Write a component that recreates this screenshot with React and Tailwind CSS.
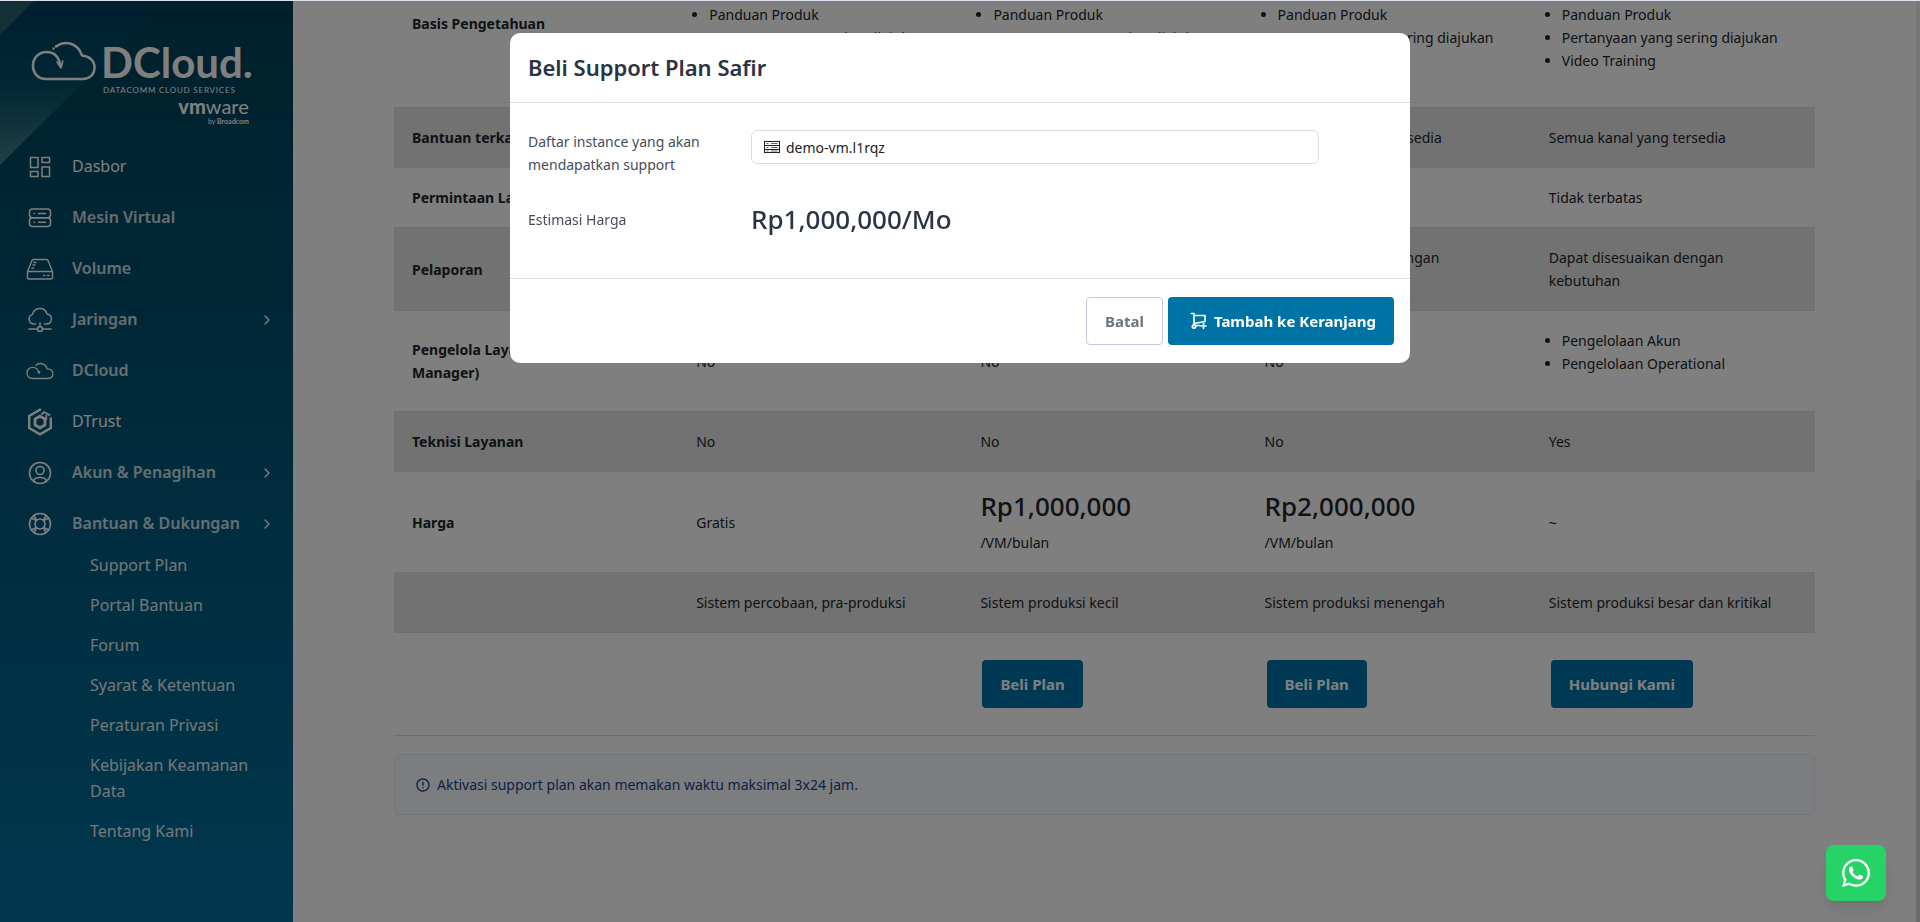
import React from "react";
import { FaWhatsapp } from "react-icons/fa";
import { RiErrorWarningLine } from "react-icons/ri";
import { ChevronRight } from "lucide-react";

const iconProps = {
  fill: "none",
  stroke: "currentColor",
  strokeLinecap: "round",
  strokeLinejoin: "round",
};

const DashboardIcon = () => (
  <svg width="22" height="22" viewBox="0 0 22 22" {...iconProps} strokeWidth="1.5" strokeLinejoin="miter">
    <rect x="1.5" y="1.5" width="7.5" height="10" />
    <rect x="13" y="1.5" width="7.5" height="5" />
    <rect x="1.5" y="15.5" width="7.5" height="5" />
    <rect x="13" y="11" width="7.5" height="9.5" />
  </svg>
);

const ServerIcon = () => (
  <svg width="24" height="22" viewBox="0 0 24 22" {...iconProps} strokeWidth="1.5">
    <rect x="1.5" y="2" width="21" height="8.8" rx="3" />
    <rect x="1.5" y="10.8" width="21" height="8.8" rx="3" />
    <path d="M6 6.4h.5M10.5 6.4h7M6 15.2h.5M10.5 15.2h7" />
  </svg>
);

const VolumeIcon = () => (
  <svg width="28" height="24" viewBox="0 0 28 24" {...iconProps} strokeWidth="1.4">
    <path d="M1.500 14.500 6 3.500q.4-1 1.500-1h13q1.100 0 1.500 1l4.500 11v6q0 1.500-1.500 1.500H3q-1.500 0-1.500-1.500zM1.500 14.500h25" />
    <path d="M17.500 18.500h1.500M21.500 18.500h1.500M7 8h2M8 5.500h2M6 11h1.500" />
  </svg>
);

const NetworkIcon = () => (
  <svg width="26" height="26" viewBox="0 0 26 26" {...iconProps} strokeWidth="1.5">
    <path d="M8.500 17H6a5 5 0 0 1-.5-9.600A7.500 7.500 0 0 1 20 6.900 5.100 5.100 0 0 1 20 17h-2.500" />
    <circle cx="13" cy="22" r="2.500" />
    <path d="M13 19.500V16M2 22h8.500M15.500 22H24" />
  </svg>
);

const CloudIcon = () => (
  <svg width="28" height="18" viewBox="0 0 28 18" {...iconProps} strokeWidth="1.3">
    <path d="M10 3.200C12 1 17 .6 19.800 4c.7.9 1.100 1.800 1.200 2.800 3.200-.2 6 2 6 5 0 2.900-2 4.700-5 4.700H6.500c-3.300 0-5.500-2.300-5.500-5.500s2.400-5.700 5.500-5.700c3.500 0 5.800 2.200 6.500 5.900M12 9.700l1.200 1.500 .6-1.800" />
  </svg>
);

const TrustIcon = () => (
  <svg width="26" height="28" viewBox="0 0 26 28" fill="none" stroke="currentColor" strokeWidth="2.4">
    <path d="M14 2.200 13 1.600 2.200 7.900v12.200L13 26.400l10.800-6.300V9.500" />
    <path d="M13 8.200 18 11.100v5.800l-5 2.900-5-2.900v-5.800z" strokeWidth="2.8" />
    <path d="M14.500 6.500l2.500-2.500 6 3.400M19.300 7v5" strokeWidth="1.8" />
  </svg>
);

const AccountIcon = () => (
  <svg width="24" height="24" viewBox="0 0 24 24" {...iconProps} strokeWidth="1.6">
    <circle cx="12" cy="12" r="10.500" />
    <circle cx="12" cy="9.500" r="4" />
    <path d="M5.500 20c1-3 3.500-3.500 6.500-3.500s5.500.5 6.500 3.500" />
  </svg>
);

const HelpIcon = () => (
  <svg width="24" height="24" viewBox="0 0 24 24" {...iconProps} strokeWidth="1.6">
    <circle cx="12" cy="12" r="10.500" />
    <circle cx="12" cy="12" r="5" />
    <path d="m3.500 6 4.800 2.600M6 3.500l2.600 4.800M20.500 6l-4.800 2.600M18 3.500l-2.600 4.800M3.500 18l4.800-2.600M6 20.500l2.600-4.800M20.500 18l-4.800-2.600M18 20.500l-2.600-4.800" />
  </svg>
);

const InstanceIcon = () => (
  <svg width="16" height="14" viewBox="0 0 16 14" fill="none" stroke="currentColor">
    <path d="M.5 1.500h15v11H.5zM.5 5.500h15M.5 9.500h15" strokeWidth="1.2" />
    <path d="M2.500 3.500h2M2.500 7.500h2M2.500 11h2M7 3.500h6.500M7 7.500h6.500M7 11h6.500" strokeOpacity="0.7" />
  </svg>
);

const CartIcon = () => (
  <svg width="18" height="18" viewBox="0 0 18 18" {...iconProps} strokeWidth="1.6">
    <path d="M1.500 1.500H4v11M4 3.500h11v6L4 11.500M4 13.500h6" />
    <circle cx="4" cy="14.500" r="1.700" />
    <path d="M13.500 11.500v5M11 14h5" />
  </svg>
);

const Logo = () => (
  <a href="#beranda" className="mx-[31px] mt-10 flex text-white" aria-label="DCloud">
    <svg width="66" height="42" viewBox="0 0 66 42" {...iconProps} strokeWidth="2.6">
      <path d="M25 5.500C33-.5 46 .5 51 14.500c7 .5 12.500 5 12.500 12 0 7-5 11.500-11.500 11.500H15C7 38 2 32 2 24.500S8 11 15.500 11c8 0 12.500 5 14 14" />
      <path d="m26 21 4 6 1.800-7" strokeWidth="1.6" />
      <circle cx="22.500" cy="7.500" r="1.200" fill="currentColor" stroke="none" />
    </svg>
    <div className="flex flex-col pl-1 font-[Lato]">
      <span className="text-[42px] leading-[42px] font-bold">DCloud.</span>
      <span className="pl-0.5 text-[8px] leading-[14px] tracking-widest whitespace-nowrap">
        DATACOMM CLOUD SERVICES
      </span>
      <span className="pr-1 text-right text-[20px] leading-[18px]">
        <b className="font-black">vm</b>ware
      </span>
      <span className="pr-1 text-right text-[7px] leading-3">
        by <b>Broadcom</b>
      </span>
    </div>
  </a>
);

const menus = [
  { label: "Dasbor", icon: DashboardIcon, light: true },
  { label: "Mesin Virtual", icon: ServerIcon },
  { label: "Volume", icon: VolumeIcon },
  { label: "Jaringan", icon: NetworkIcon, arrow: true },
  { label: "DCloud", icon: CloudIcon },
  { label: "DTrust", icon: TrustIcon, light: true },
  { label: "Akun & Penagihan", icon: AccountIcon, arrow: true },
  { label: "Bantuan & Dukungan", icon: HelpIcon, arrow: true },
];

const subMenus = [
  "Support Plan",
  "Portal Bantuan",
  "Forum",
  "Syarat & Ketentuan",
  "Peraturan Privasi",
  "Kebijakan Keamanan Data",
  "Tentang Kami",
];

const Sidebar = () => (
  <aside className="relative w-[293px] shrink-0 overflow-hidden bg-linear-to-b from-[#004058] to-[#006f9c]">
    <svg className="absolute top-0 left-0" width="170" height="166" viewBox="0 0 170 166" aria-hidden="true">
      <defs>
        <linearGradient id="shine" x1="0" y1="0" x2="0" y2="1">
          <stop offset="0" stopColor="#003a6e" stopOpacity="0.3" />
          <stop offset="0.5" stopColor="#0a5f78" stopOpacity="0.4" />
          <stop offset="1" stopColor="#7fa8b0" stopOpacity="0.6" />
        </linearGradient>
      </defs>
      <path d="M0 0h166L0 164z" fill="url(#shine)" />
      <path d="M0 0h34L0 34z" fill="#5f8f86" fillOpacity="0.4" />
    </svg>
    <div className="relative">
      <Logo />
      <nav className="mt-[14px] text-[16px] text-white">
        {menus.map(({ label, icon: Icon, light, arrow }) => (
          <a key={label} href="#menu" className="flex h-[51px] items-center pr-[18px] pl-[26px]">
            <span className="flex w-7 justify-center">
              <Icon />
            </span>
            <span className={light ? "ml-[18px] flex-1" : "ml-[18px] flex-1 font-semibold text-white/80"}>
              {label}
            </span>
            {arrow && <ChevronRight size={16} />}
          </a>
        ))}
        <ul className="-mt-1">
          {subMenus.map((label) => (
            <li key={label}>
              <a href="#submenu" className="block py-[7px] pr-8 pl-[90px] leading-[26px] text-white/90">
                {label}
              </a>
            </li>
          ))}
        </ul>
      </nav>
    </div>
  </aside>
);

const List = ({ items }) => (
  <ul className="mb-[18px] list-disc pl-[13px]">
    {items.map((item) => (
      <li key={item}>{item}</li>
    ))}
  </ul>
);

const Price = ({ value }) => (
  <>
    <div className="mb-2 text-[26px] leading-[33px] font-medium">{value}</div>
    <div>/VM/bulan</div>
  </>
);

const PlanButton = ({ children }) => (
  <button
    type="button"
    className="mx-0.5 my-[9px] h-12 rounded bg-[#0073a6] px-[18px] text-[15px] font-bold text-white"
  >
    {children}
  </button>
);

const pengetahuan = ["Panduan Produk", "Pertanyaan yang sering diajukan"];

const rows = [
  {
    title: "Bantuan terkait",
    cells: ["Email", "Semua kanal yang tersedia", "Semua kanal yang tersedia", "Semua kanal yang tersedia"],
  },
  {
    title: "Permintaan Layanan",
    cells: ["", "", "", "Tidak terbatas"],
  },
  {
    title: "Pelaporan",
    cells: ["", "", "Dapat disesuaikan dengan kebutuhan", "Dapat disesuaikan dengan kebutuhan"],
  },
  {
    title: "Pengelola Layanan (Service Manager)",
    cells: ["No", "No", "No", <List items={["Pengelolaan Akun", "Pengelolaan Operational"]} />],
  },
  { title: "Teknisi Layanan", cells: ["No", "No", "No", "Yes"] },
  {
    title: "Harga",
    cells: ["Gratis", <Price value="Rp1,000,000" />, <Price value="Rp2,000,000" />, "~"],
  },
  {
    title: "",
    cells: [
      "Sistem percobaan, pra-produksi",
      "Sistem produksi kecil",
      "Sistem produksi menengah",
      "Sistem produksi besar dan kritikal",
    ],
  },
  {
    title: "",
    cells: [
      "",
      <PlanButton>Beli Plan</PlanButton>,
      <PlanButton>Beli Plan</PlanButton>,
      <PlanButton>Hubungi Kami</PlanButton>,
    ],
  },
];

// Striped rows: grey for the 1st, 3rd, 5th... feature
const PlanTable = () => (
  <table className="w-full table-fixed border-separate border-spacing-0 border-b border-[#dcdce0] text-left">
    <thead>
      <tr className="align-top">
        <th className="px-[18px] pt-[11px] font-bold">Basis Pengetahuan</th>
        {[0, 1, 2, 3].map((i) => (
          <td key={i} className="px-[18px] pt-0.5 pb-[17px]">
            <List items={i === 3 ? [...pengetahuan, "Video Training"] : pengetahuan} />
          </td>
        ))}
      </tr>
    </thead>
    <tbody>
      {rows.map(({ title, cells }, i) => (
        <tr key={i} className="odd:bg-[#e5e5e5] odd:*:border-y odd:*:border-[#e0e0e0] even:bg-white">
          <th className="px-[18px] py-[18px] font-bold">{title}</th>
          {cells.map((cell, j) => (
            <td key={j} className="py-[18px] pr-6 pl-[18px]">
              {cell}
            </td>
          ))}
        </tr>
      ))}
    </tbody>
  </table>
);

const Modal = () => (
  <div
    role="dialog"
    aria-modal="true"
    aria-labelledby="modal-title"
    className="fixed inset-x-0 top-[33px] mx-auto max-w-[900px] rounded-[10px] bg-white text-[#2b3445]"
  >
    <div className="border-b border-[#dcdce6] px-[18px] py-5">
      <h2 id="modal-title" className="text-[22px] leading-[29px] font-semibold">
        Beli Support Plan Safir
      </h2>
    </div>
    <div className="border-b border-[#dcdce6] pt-[27px] pb-[41px]">
      <div className="grid grid-cols-12">
        <label htmlFor="instance" className="col-span-3 pl-[18px] text-[#454d5c]">
          Daftar instance yang akan
          <br />
          mendapatkan support
        </label>
        <div className="col-span-8 px-4">
          <div className="flex h-[34px] items-center gap-1.5 rounded-md border border-[#dcdce0] px-3 text-[#222]">
            <InstanceIcon />
            <input
              id="instance"
              type="text"
              defaultValue="demo-vm.l1rqz"
              className="min-w-0 flex-1 bg-transparent outline-none"
            />
          </div>
        </div>
      </div>
      <div className="mt-[25px] grid grid-cols-12 items-center">
        <div className="col-span-3 pl-[18px] text-[#454d5c]">Estimasi Harga</div>
        <div className="col-span-8 px-4 text-[26px] leading-[36px] font-medium">Rp1,000,000/Mo</div>
      </div>
    </div>
    <div className="flex justify-end gap-[5px] px-4 py-[18px] text-[15px] font-bold">
      <button type="button" className="h-12 rounded border border-[#c8c6dc] px-[18px] text-[#6c757d]">
        Batal
      </button>
      <button
        type="button"
        className="flex h-12 items-center gap-1.5 rounded bg-[#0073a6] pr-[18px] pl-[22px] text-white"
      >
        <CartIcon />
        Tambah ke Keranjang
      </button>
    </div>
  </div>
);

const App = () => {
  return (
    <div className="flex h-screen overflow-hidden border-t border-[#dfe0ee] bg-white font-['Noto_Sans',sans-serif] text-[14px] leading-[23px] text-[#212529]">
      <Sidebar />
      <main className="min-w-0 flex-1 px-[101px]">
        <PlanTable />
        <div className="mt-[18px] flex items-center gap-1.5 rounded-md border border-[#e2edfc] bg-[#f8fbff] px-5 py-[18px] text-[#1c3f8c]">
          <RiErrorWarningLine size={16} />
          Aktivasi support plan akan memakan waktu maksimal 3x24 jam.
        </div>
      </main>
      <div className="flex w-1 shrink-0 flex-col justify-end bg-[#f0f0f0]">
        <div className="h-[48%] bg-[#d8d8d8]" />
      </div>

      <div className="fixed inset-x-0 top-px bottom-0 bg-black/50" />
      <Modal />
      <a
        href="#whatsapp"
        aria-label="WhatsApp"
        className="fixed right-[34px] bottom-[21px] flex h-14 w-[60px] items-center justify-center rounded-lg bg-[#25d366] text-white shadow-lg"
      >
        <FaWhatsapp size={32} />
      </a>
    </div>
  );
};

export default App;
